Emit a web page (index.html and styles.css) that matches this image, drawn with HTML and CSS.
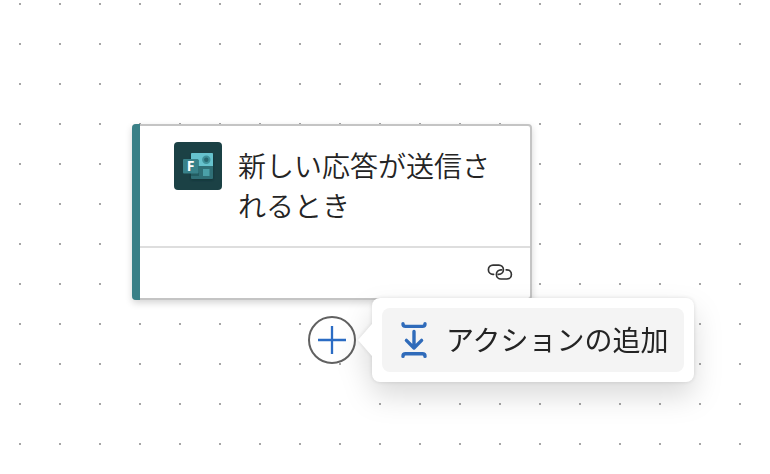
FILE: index.html
```html
<!DOCTYPE html>
<html lang="ja">
<head>
<meta charset="utf-8">
<title>フロー デザイナー</title>
<link rel="stylesheet" href="styles.css">
</head>
<body>
<main class="canvas">
  <article class="card">
    <div class="card-header">
      <svg class="connector-icon" viewBox="0 0 48 48" aria-hidden="true">
        <defs>
          <filter id="soft" x="-30%" y="-30%" width="160%" height="160%"><feGaussianBlur stdDeviation="1.2"/></filter>
        </defs>
        <rect width="48" height="48" rx="4" fill="#1b4145"/>
        <rect x="17" y="13" width="22" height="25" rx="1" fill="#0b2a2d" opacity=".6" filter="url(#soft)"/>
        <rect x="17" y="11" width="22" height="26" rx="1" fill="#2f6f76"/>
        <path d="M18 11h20a1 1 0 0 1 1 1v12H17V12a1 1 0 0 1 1-1z" fill="#66c2cd"/>
        <path d="M17 18h8v16h-8z" fill="#174449" opacity=".45"/>
        <circle cx="32.3" cy="17.7" r="4.2" fill="#3f929b"/>
        <circle cx="32.3" cy="17.7" r="2.2" fill="#286971"/>
        <rect x="29" y="27" width="6.5" height="7" fill="#4ba0a8"/>
        <rect x="9" y="17" width="15.5" height="14.5" rx="1" fill="#38828a"/>
        <text class="connector-letter" x="16.7" y="29" text-anchor="middle">F</text>
      </svg>
      <h1 class="card-title">新しい応答が送信されるとき</h1>
    </div>
    <div class="card-footer">
      <svg class="link-icon" viewBox="0 0 26 18" aria-hidden="true">
        <path d="M6.6 11.3H6a4.6 4.6 0 0 1 0-9.2h5.8a4.6 4.6 0 0 1 0 9.2h-.6"/>
        <path d="M19.2 6.8h.6a4.6 4.6 0 0 1 0 9.2H14a4.6 4.6 0 0 1 0-9.2h.6"/>
      </svg>
    </div>
  </article>
  <button class="add-button" aria-label="追加">
    <svg viewBox="0 0 48 48"><path d="M10 24h28M24 10v28"/></svg>
  </button>
  <div class="popover">
    <button class="menu-item">
      <svg class="insert-icon" viewBox="0 0 28 38" aria-hidden="true">
        <path d="M3 2.8v.2q0 2.4 2.6 2.4h16.8q2.6 0 2.6-2.4v-.2M14 10.4v16.6M6.4 19.4l7.6 7.6 7.6-7.6M3 35.4v-.2q0-2.4 2.6-2.4h16.8q2.6 0 2.6 2.4v.2"/>
      </svg>
      <span class="menu-label">アクションの追加</span>
    </button>
  </div>
</main>
</body>
</html>
```
FILE: styles.css
```css
* {
  box-sizing: border-box;
}

body {
  margin: 0;
  font-family: "Noto Sans CJK JP", sans-serif;
  color: #242424;
}

.canvas {
  position: relative;
  width: 770px;
  height: 474px;
  overflow: hidden;
  background-color: #fff;
  background-image: conic-gradient(from 90deg at 38px 38px, #a6a6a6 90deg, transparent 0);
  background-position: -19px -35px;
  background-size: 40px 40px;
}

.card {
  position: absolute;
  left: 132px;
  top: 124px;
  width: 400px;
  height: 176px;
  display: flex;
  flex-direction: column;
  background: #fff;
  border: 2px solid #c4c4c4;
  border-left: 0;
  border-radius: 4px;
  padding-left: 8px;
  box-shadow: 0 3px 7px rgba(0, 0, 0, .17);
}

.card::before {
  content: "";
  position: absolute;
  left: 0;
  top: -2px;
  bottom: -2px;
  width: 8px;
  border-radius: 4px 0 0 4px;
  background: #3a8087;
}

.card-header {
  display: flex;
  gap: 16px;
  height: 122px;
  padding: 16px 34px 0;
  border-bottom: 2px solid #dedede;
}

.connector-icon {
  flex: none;
  width: 48px;
  height: 48px;
}

.connector-letter {
  font: 700 14px "Open Sans", sans-serif;
  fill: #fff;
}

.card-title {
  width: 256px;
  margin: 3px -6px 0 0;
  font-size: 28px;
  font-weight: 350;
  line-height: 40px;
  flex: none;
}

.card-footer {
  flex: 1;
  display: flex;
  justify-content: flex-end;
  padding: 15px 17px 0 0;
}

.link-icon {
  width: 26px;
  height: 18px;
  fill: none;
  stroke: #333;
  stroke-width: 1.7;
  stroke-linecap: round;
}

.add-button {
  position: absolute;
  left: 308px;
  top: 316px;
  width: 48px;
  height: 48px;
  padding: 0;
  border: 2px solid #616161;
  border-radius: 50%;
  background: #fff;
}

.add-button svg {
  display: block;
  width: 48px;
  height: 48px;
  margin: -2px;
  stroke: #2b6cc4;
  stroke-width: 2.3;
}

.popover {
  position: absolute;
  left: 372px;
  top: 298px;
  width: 322px;
  height: 84px;
  padding: 10px;
  border-radius: 8px;
  background: #fff;
  filter: drop-shadow(0 0 2px rgba(0, 0, 0, .12)) drop-shadow(0 14px 14px rgba(0, 0, 0, .14));
}

.popover::before {
  content: "";
  position: absolute;
  left: -14px;
  top: 26px;
  width: 15px;
  height: 32px;
  background: #fff;
  clip-path: polygon(100% 0, 93% 0, 0 50%, 93% 100%, 100% 100%);
}

.menu-item {
  display: flex;
  align-items: center;
  gap: 18px;
  width: 302px;
  height: 64px;
  padding: 0 18px;
  border: 0;
  border-radius: 8px;
  background: #f4f4f4;
  color: inherit;
  font: inherit;
  font-size: 28px;
  line-height: 40px;
  white-space: nowrap;
}

.menu-label {
  margin-top: -2px;
}

.insert-icon {
  flex: none;
  width: 28px;
  height: 38px;
  fill: none;
  stroke: #2f6bba;
  stroke-width: 3.4;
  stroke-linecap: round;
  stroke-linejoin: round;
}
```
